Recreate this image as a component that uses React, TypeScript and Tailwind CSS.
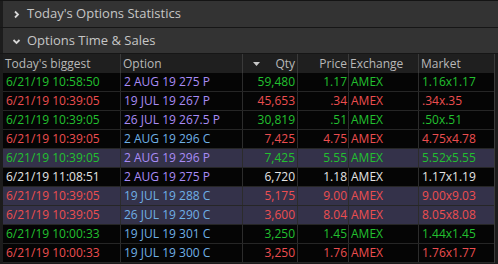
import React from 'react';

type Tone = 'g' | 'r' | 'w';
type OptTone = 'p' | 'b';

interface Trade {
  time: string;
  option: string;
  qty: string;
  price: string;
  exch: string;
  market: string;
  tone: Tone;
  opt: OptTone;
  hl?: boolean;
}

const trades: Trade[] = [
  { time: '6/21/19 10:58:50', option: '2 AUG 19 275 P', qty: '59,480', price: '1.17', exch: 'AMEX', market: '1.16x1.17', tone: 'g', opt: 'p' },
  { time: '6/21/19 10:39:05', option: '19 JUL 19 267 P', qty: '45,653', price: '.34', exch: 'AMEX', market: '.34x.35', tone: 'r', opt: 'p' },
  { time: '6/21/19 10:39:05', option: '26 JUL 19 267.5 P', qty: '30,819', price: '.51', exch: 'AMEX', market: '.50x.51', tone: 'g', opt: 'p' },
  { time: '6/21/19 10:39:05', option: '2 AUG 19 296 C', qty: '7,425', price: '4.75', exch: 'AMEX', market: '4.75x4.78', tone: 'r', opt: 'b' },
  { time: '6/21/19 10:39:05', option: '2 AUG 19 296 P', qty: '7,425', price: '5.55', exch: 'AMEX', market: '5.52x5.55', tone: 'g', opt: 'p', hl: true },
  { time: '6/21/19 11:08:51', option: '2 AUG 19 275 P', qty: '6,720', price: '1.18', exch: 'AMEX', market: '1.17x1.19', tone: 'w', opt: 'p' },
  { time: '6/21/19 10:39:05', option: '19 JUL 19 288 C', qty: '5,175', price: '9.00', exch: 'AMEX', market: '9.00x9.03', tone: 'r', opt: 'b', hl: true },
  { time: '6/21/19 10:39:05', option: '26 JUL 19 290 C', qty: '3,600', price: '8.04', exch: 'AMEX', market: '8.05x8.08', tone: 'r', opt: 'b', hl: true },
  { time: '6/21/19 10:00:33', option: '19 JUL 19 301 C', qty: '3,250', price: '1.45', exch: 'AMEX', market: '1.44x1.45', tone: 'g', opt: 'b' },
  { time: '6/21/19 10:00:33', option: '19 JUL 19 300 C', qty: '3,250', price: '1.76', exch: 'AMEX', market: '1.76x1.77', tone: 'r', opt: 'b' },
];

const toneClass: Record<Tone, string> = {
  g: 'text-[#22c02f]',
  r: 'text-[#ec4e50]',
  w: 'text-[#e4e4e4]',
};

const optClass: Record<OptTone, string> = {
  p: 'text-[#a98cf6]',
  b: 'text-[#6fb0e6]',
};

const cols = 'grid grid-cols-[118px_122px_55px_51px_70px_75px]';

function SectionHeader({ title, open }: { title: string; open?: boolean }) {
  return (
    <div className="flex items-center h-full bg-[#333333] pl-[9px] gap-[6px] text-[13px] text-[#c6c6c6]">
      {open ? (
        <svg width="9" height="9" viewBox="0 0 9 9" className="mt-[1px]">
          <path d="M1.5 3 L4.5 6 L7.5 3" stroke="#d6d6d6" strokeWidth="1.8" fill="none" />
        </svg>
      ) : (
        <svg width="9" height="9" viewBox="0 0 9 9">
          <path d="M3 1.5 L6 4.5 L3 7.5" stroke="#d6d6d6" strokeWidth="1.8" fill="none" />
        </svg>
      )}
      <span>{title}</span>
    </div>
  );
}

export default function App() {
  return (
    <div
      className="w-[498px] h-[264px] overflow-hidden bg-[#1c1c1c] flex flex-col"
      style={{ fontFamily: '"Open Sans", "Noto Sans", sans-serif' }}
    >
      <div className="h-[1px] bg-[#141414]" />
      <div className="h-[26px] pl-[3px]">
        <SectionHeader title="Today's Options Statistics" />
      </div>
      <div className="h-[1px] bg-[#161616]" />
      <div className="h-[25px] pl-[3px]">
        <SectionHeader title="Options Time & Sales" open />
      </div>
      <div className="h-[1px] bg-[#161616]" />

      <div className="flex-1 pl-[3px] pr-[3px] bg-[#1c1c1c]">
        <div className="border-r border-[#3a3a3a]">
          <div className={`${cols} h-[19px] bg-[#1f1f1f] text-[12px] text-[#b8b8b8] leading-[19px]`}>
            <div className="pl-[2px] border-r border-[#3a3a3a]">Today's biggest</div>
            <div className="pl-[2px] border-r border-[#3a3a3a]">Option</div>
            <div className="flex items-center justify-between pl-[10px] pr-[2px] border-r border-[#3a3a3a]">
              <svg width="7" height="4" viewBox="0 0 7 4">
                <path d="M0 0 H7 L3.5 4 Z" fill="#c8c8c8" />
              </svg>
              <span>Qty</span>
            </div>
            <div className="text-right pr-[1px] border-r border-[#3a3a3a]">Price</div>
            <div className="pl-[1px] border-r border-[#3a3a3a]">Exchange</div>
            <div className="pl-[2px]">Market</div>
          </div>

          {trades.map((t, i) => (
            <div
              key={i}
              className={`${cols} h-[19px] text-[12px] leading-[18px] border-b border-[#262626] ${
                t.hl ? 'bg-[#34324a]' : 'bg-[#050505]'
              }`}
            >
              <div className={`pl-[3px] border-r border-[#2c2c2c] ${toneClass[t.tone]}`}>{t.time}</div>
              <div className={`pl-[3px] border-r border-[#2c2c2c] ${optClass[t.opt]}`}>{t.option}</div>
              <div className={`text-right pr-[2px] border-r border-[#2c2c2c] ${toneClass[t.tone]}`}>{t.qty}</div>
              <div className={`text-right pr-[1px] border-r border-[#2c2c2c] ${toneClass[t.tone]}`}>{t.price}</div>
              <div className={`pl-[2px] border-r border-[#2c2c2c] ${toneClass[t.tone]}`}>{t.exch}</div>
              <div className={`pl-[3px] ${toneClass[t.tone]}`}>{t.market}</div>
            </div>
          ))}
        </div>
      </div>
    </div>
  );
}
